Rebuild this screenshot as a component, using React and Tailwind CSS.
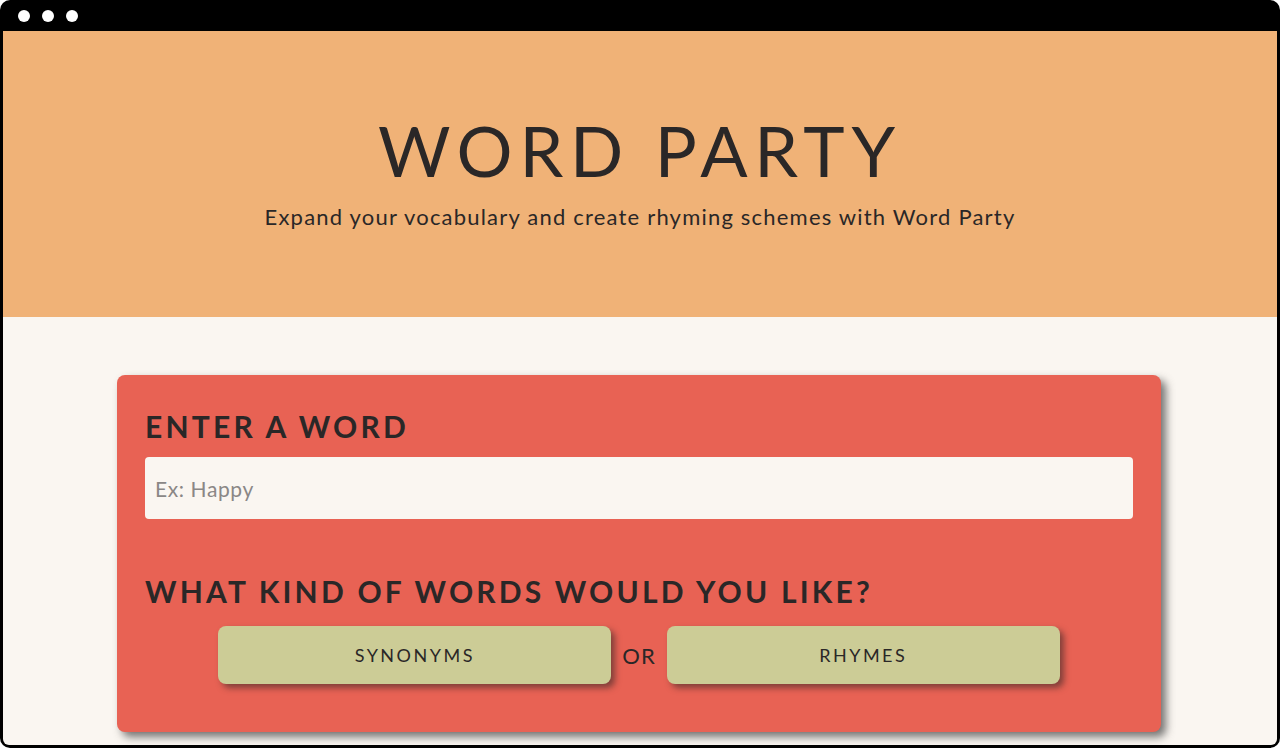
export default function App() {
  return (
    <div className="w-[1280px] h-[748px] bg-white">
      <div className="h-full bg-black rounded-[10px] pt-[31px] px-[3px] pb-[3px] flex flex-col relative">
        <div className="absolute top-[10px] left-[18px] flex gap-[12px]">
          <span className="w-[12px] h-[12px] rounded-full bg-white" />
          <span className="w-[12px] h-[12px] rounded-full bg-white" />
          <span className="w-[12px] h-[12px] rounded-full bg-white" />
        </div>
        <div className="flex-1 bg-[#faf6f1] overflow-hidden rounded-b-[6px] font-['Lato','Noto_Sans',sans-serif] text-[#2a2727]">
          <header className="h-[286px] bg-[#f0b277] flex flex-col items-center pt-[84px]">
            <h1 className="text-[70px] leading-none font-normal tracking-[6.8px]">WORD PARTY</h1>
            <p className="mt-[15px] text-[22px] tracking-[1.2px]">
              Expand your vocabulary and create rhyming schemes with Word Party
            </p>
          </header>
          <main className="pt-[58px]">
            <div className="w-[1044px] ml-[114px] bg-[#e86254] rounded-[8px] shadow-[5px_5px_8px_rgba(60,60,60,0.7)] px-[28px] pt-[36px] pb-[48px]">
              <h2 className="text-[30px] leading-none font-bold tracking-[3.2px]">ENTER A WORD</h2>
              <input
                type="text"
                placeholder="Ex: Happy"
                className="mt-[16px] w-full h-[62px] bg-[#faf6f1] rounded-[4px] px-[10px] text-[21px] tracking-[0.6px] placeholder:text-[#8a8786] outline-none"
              />
              <h2 className="mt-[57px] text-[30px] leading-none font-bold tracking-[3.2px]">WHAT KIND OF WORDS WOULD YOU LIKE?</h2>
              <div className="mt-[20px] flex items-center justify-center gap-[11px]">
                <button className="w-[393px] h-[58px] bg-[#cccc96] rounded-[8px] shadow-[4px_4px_6px_rgba(60,40,40,0.6)] text-[18px] tracking-[2.5px]">
                  SYNONYMS
                </button>
                <span className="text-[22px] tracking-[1px]">OR</span>
                <button className="w-[393px] h-[58px] bg-[#cccc96] rounded-[8px] shadow-[4px_4px_6px_rgba(60,40,40,0.6)] text-[18px] tracking-[2.5px]">
                  RHYMES
                </button>
              </div>
            </div>
          </main>
        </div>
      </div>
    </div>
  )
}
